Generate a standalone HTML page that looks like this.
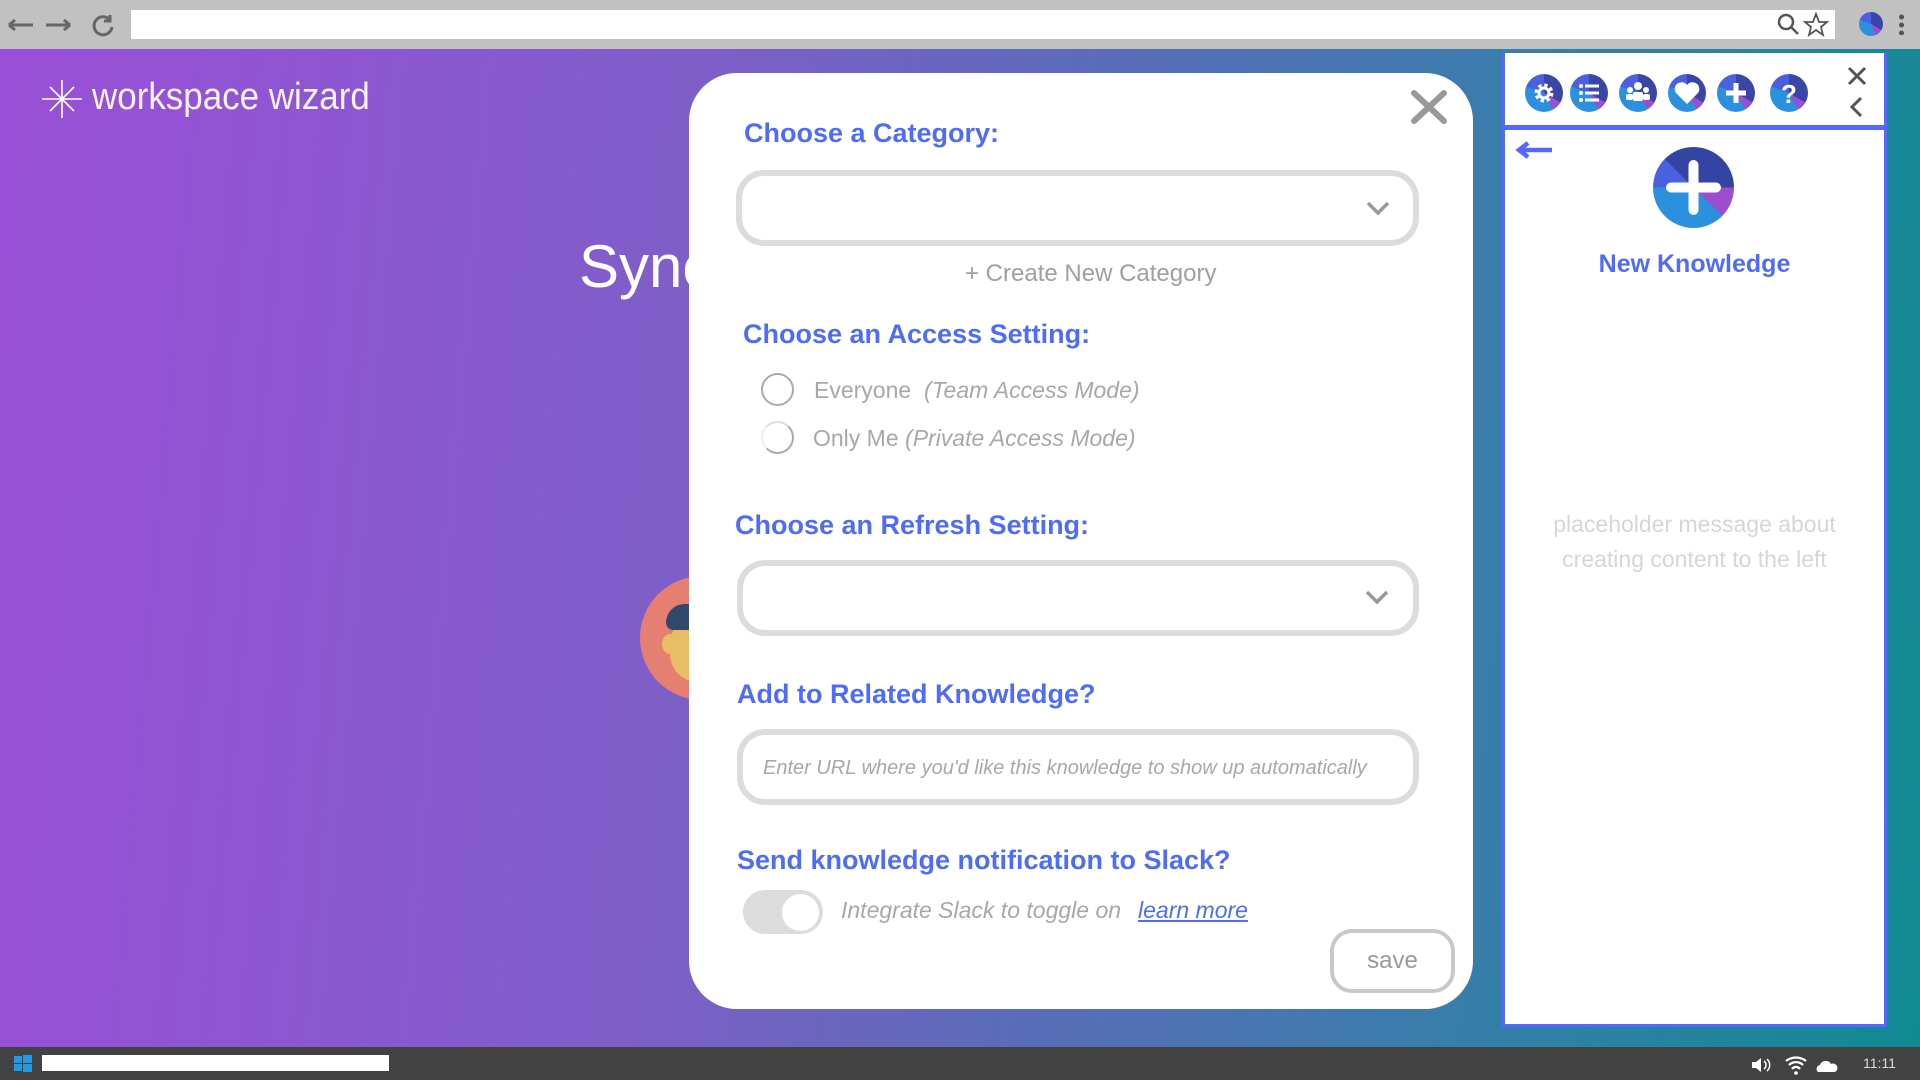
<!DOCTYPE html>
<html><head><meta charset="utf-8"><style>
*{margin:0;padding:0;box-sizing:border-box}
body{width:1920px;height:1080px;overflow:hidden;position:relative;font-family:"Liberation Sans",sans-serif;background:linear-gradient(95deg,#9a4fd8 0%,#7f5ec8 35%,#5a6cb8 55%,#3a7dab 75%,#108a92 100%)}
.abs{position:absolute}
.h{color:#4f6cf7;font-weight:bold;font-size:27px;position:absolute;white-space:nowrap}
.sel{position:absolute;border:6px solid #dcdcdc;border-radius:28px;background:#fff}
.g{color:#9a9a9a}
.ic{position:absolute;width:38px;height:38px;border-radius:50%;background:conic-gradient(from 0deg,#3a45a8 0 120deg,#9b4fcf 120deg 150deg,#2b90dd 150deg 290deg,#4a60e0 290deg 360deg);top:74px}
.ic svg{position:absolute;left:0;top:0}
</style></head><body>
<div class="abs" style="left:0;top:0;width:1920px;height:49px;background:#c1c1c1"></div>
<svg class="abs" style="left:6px;top:12px" width="110" height="26"><g stroke="#666" stroke-width="3" fill="none"><path d="M3 13h24M3 13l6-5M3 13l6 5"/><path d="M40 13h24M64 13l-6-5M64 13l-6 5"/><path d="M104 8a9 9 0 1 0 2 7"/><path d="M104 3v6h-6" /></g></svg>
<div class="abs" style="left:131px;top:10px;width:1704px;height:29px;background:#fff"></div>
<svg class="abs" style="left:1776px;top:11px" width="58" height="28"><g stroke="#555" stroke-width="2.5" fill="none"><circle cx="10" cy="11" r="7"/><path d="M15 16l7 7"/><path d="M40 3l3 8h8l-6 5 2 8-7-5-7 5 2-8-6-5h8z" stroke-width="1.8"/></g></svg>
<div class="abs" style="left:1859px;top:12px;width:24px;height:24px;border-radius:50%;background:conic-gradient(#3a45a8 0 120deg,#9b4fcf 120deg 160deg,#2b90dd 160deg 290deg,#4a60e0 290deg)"></div>
<div class="abs" style="left:1899px;top:13px;width:5px;height:22px;background:radial-gradient(circle,#555 2.4px,transparent 2.6px) 0 0/5px 8px"></div>

<svg class="abs" style="left:40px;top:78px" width="44" height="42"><g stroke="#fff" stroke-width="1.6"><path d="M22 2v38M2 21h40M10 9l24 24M34 9L10 33"/></g></svg>
<div class="abs" style="left:92px;top:76px;color:rgba(255,255,255,0.92);font-size:38px;font-weight:normal;letter-spacing:0px;transform:scaleX(0.92);transform-origin:left">workspace wizard</div>
<div class="abs" style="left:579px;top:232px;color:#fff;font-size:60px">Sync</div>
<div class="abs" style="left:640px;top:576px;width:124px;height:124px;border-radius:50%;background:#e57f71;overflow:hidden">
 <div class="abs" style="left:50px;top:92px;width:80px;height:40px;background:#7fc4e8;border-radius:10px"></div>
 <div class="abs" style="left:60px;top:92px;width:40px;height:30px;background:#dde8f4"></div>
 <div class="abs" style="left:22px;top:58px;width:16px;height:20px;border-radius:50%;background:#e9bd65"></div>
 <div class="abs" style="left:30px;top:40px;width:60px;height:66px;border-radius:28px;background:#e9bd65"></div>
 <div class="abs" style="left:26px;top:28px;width:64px;height:26px;border-radius:30px 30px 6px 12px;background:#2f4a6b"></div>
</div>

<div class="abs" style="left:689px;top:73px;width:784px;height:936px;background:#fff;border-radius:48px"></div>
<svg class="abs" style="left:1409px;top:88px" width="40" height="38"><g stroke="#999" stroke-width="6" stroke-linecap="round"><path d="M5 5l30 28M35 5L5 33"/></g></svg>
<div class="h" style="left:744px;top:118px">Choose a Category:</div>
<div class="sel" style="left:736px;top:170px;width:683px;height:76px"></div>
<svg class="abs" style="left:1365px;top:200px" width="26" height="18"><path d="M3 3l10 10 10-10" stroke="#999" stroke-width="3.5" fill="none"/></svg>
<div class="abs g" style="left:965px;top:260px;font-size:24px;color:#9f9f9f">+ Create New Category</div>
<div class="h" style="left:743px;top:319px">Choose an Access Setting:</div>
<div class="abs" style="left:761px;top:373px;width:33px;height:33px;border-radius:50%;border:2.5px solid #aaa"></div>
<div class="abs" style="left:761px;top:421px;width:33px;height:33px;border-radius:50%;border:2.5px solid #aaa;border-left-color:#eee;border-top-color:#ddd"></div>
<div class="abs" style="left:814px;top:377px;font-size:23px;color:#a8a8a8">Everyone&nbsp; <i>(Team Access Mode)</i></div>
<div class="abs" style="left:813px;top:425px;font-size:23px;color:#a8a8a8">Only Me <i>(Private Access Mode)</i></div>
<div class="h" style="left:735px;top:510px">Choose an Refresh Setting:</div>
<div class="sel" style="left:737px;top:560px;width:682px;height:76px"></div>
<svg class="abs" style="left:1364px;top:589px" width="26" height="18"><path d="M3 3l10 10 10-10" stroke="#999" stroke-width="3.5" fill="none"/></svg>
<div class="h" style="left:737px;top:679px">Add to Related Knowledge?</div>
<div class="sel" style="left:737px;top:729px;width:682px;height:76px"></div>
<div class="abs" style="left:763px;top:757px;font-size:20px;font-style:italic;color:#a8a8a8">Enter URL where you'd like this knowledge to show up automatically</div>
<div class="h" style="left:737px;top:845px">Send knowledge notification to Slack?</div>
<div class="abs" style="left:743px;top:890px;width:80px;height:44px;border-radius:22px;background:#dcdcdc"></div>
<div class="abs" style="left:782px;top:894px;width:37px;height:37px;border-radius:50%;background:#fff"></div>
<div class="abs" style="left:841px;top:897px;font-size:23px;font-style:italic;color:#a8a8a8">Integrate Slack to toggle on</div>
<div class="abs" style="left:1138px;top:897px;font-size:23px;font-style:italic;color:#4f6cf7;text-decoration:underline">learn more</div>
<div class="abs" style="left:1330px;top:929px;width:125px;height:64px;border:4px solid #c8c8c8;border-radius:22px;color:#9a9a9a;font-size:24px;text-align:center;line-height:56px">save</div>

<div class="abs" style="left:1502px;top:53px;width:385px;height:974px;background:#fff;border:3px solid #5468ff;border-top:none"></div>
<div class="abs" style="left:1502px;top:125px;width:385px;height:5px;background:#5468ff"></div>
<div class="ic" style="left:1525px"><svg width="38" height="38"><circle cx="19" cy="19" r="7" fill="none" stroke="#fff" stroke-width="5" stroke-dasharray="3 2.5"/><circle cx="19" cy="19" r="5" fill="none" stroke="#fff" stroke-width="3"/></svg></div>
<div class="ic" style="left:1570px"><svg width="38" height="38"><g fill="#fff"><circle cx="11" cy="12" r="2"/><circle cx="11" cy="19" r="2"/><circle cx="11" cy="26" r="2"/><rect x="15" y="10.5" width="14" height="3"/><rect x="15" y="17.5" width="14" height="3"/><rect x="15" y="24.5" width="14" height="3"/></g></svg></div>
<div class="ic" style="left:1619px"><svg width="38" height="38"><g fill="#fff"><circle cx="19" cy="12" r="4"/><circle cx="11" cy="16" r="3"/><circle cx="27" cy="16" r="3"/><rect x="14" y="18" width="10" height="9" rx="2"/><rect x="7" y="20" width="7" height="6" rx="2"/><rect x="24" y="20" width="7" height="6" rx="2"/></g></svg></div>
<div class="ic" style="left:1668px"><svg width="38" height="38"><path d="M19 30L8 19a6 6 0 0 1 11-8 6 6 0 0 1 11 8z" fill="#fff"/></svg></div>
<div class="ic" style="left:1717px"><svg width="38" height="38"><path d="M19 9v20M9 19h20" stroke="#fff" stroke-width="5"/></svg></div>
<div class="ic" style="left:1770px"><svg width="38" height="38"><text x="19" y="29" fill="#fff" font-size="26" font-weight="bold" text-anchor="middle" font-family="Liberation Sans">?</text></svg></div>
<svg class="abs" style="left:1845px;top:65px" width="24" height="60"><g stroke="#555" stroke-width="3" fill="none"><path d="M4 3l16 16M20 3L4 19"/><path d="M16 33l-9 9 9 9"/></g></svg>
<svg class="abs" style="left:1514px;top:140px" width="40" height="20"><path d="M38 10H8M14 3L5 10l9 7" stroke="#5468ff" stroke-width="4.5" fill="none"/></svg>
<div class="abs" style="left:1653px;top:147px;width:81px;height:81px;border-radius:50%;background:conic-gradient(#3444a3 0 90deg,#9b4fcf 90deg 135deg,#2b90dd 135deg 270deg,#4a60e0 270deg 315deg,#3444a3 315deg)"></div>
<svg class="abs" style="left:1653px;top:147px" width="81" height="81"><path d="M40.5 18v45M18 40.5h45" stroke="#fff" stroke-width="10" stroke-linecap="round"/></svg>
<div class="abs" style="left:1502px;top:250px;width:385px;text-align:center;color:#4f6cf7;font-size:25px;font-weight:bold">New Knowledge</div>
<div class="abs" style="left:1502px;top:507px;width:385px;text-align:center;color:#d6d6d6;font-size:23px;line-height:35px">placeholder message about<br>creating content to the left</div>

<div class="abs" style="left:0;top:1047px;width:1920px;height:33px;background:#424242"></div>
<svg class="abs" style="left:14px;top:1055px" width="18" height="18"><g fill="#1e9be8"><rect x="0" y="1" width="8" height="7"/><rect x="9" y="0" width="9" height="8"/><rect x="0" y="9" width="8" height="7"/><rect x="9" y="9" width="9" height="8"/></g></svg>
<div class="abs" style="left:42px;top:1055px;width:347px;height:16px;background:#fff"></div>
<svg class="abs" style="left:1750px;top:1055px" width="100" height="20"><g fill="#fff"><path d="M2 7h4l5-4v14l-5-4H2z"/><path d="M14 6a5 5 0 0 1 0 8M17 4a8 8 0 0 1 0 12" stroke="#fff" stroke-width="1.5" fill="none"/><path d="M36 6a16 16 0 0 1 20 0M39 10a10 10 0 0 1 14 0M42 14a5 5 0 0 1 8 0" stroke="#fff" stroke-width="2.2" fill="none"/><circle cx="46" cy="18" r="1.8"/><path d="M68 17a4 4 0 0 1 2-7 6 6 0 0 1 11-1 4 4 0 0 1 4 8z"/></g></svg>
<div class="abs" style="left:1863px;top:1055px;color:#ddd;font-size:14px">11:11</div>
</body></html>
